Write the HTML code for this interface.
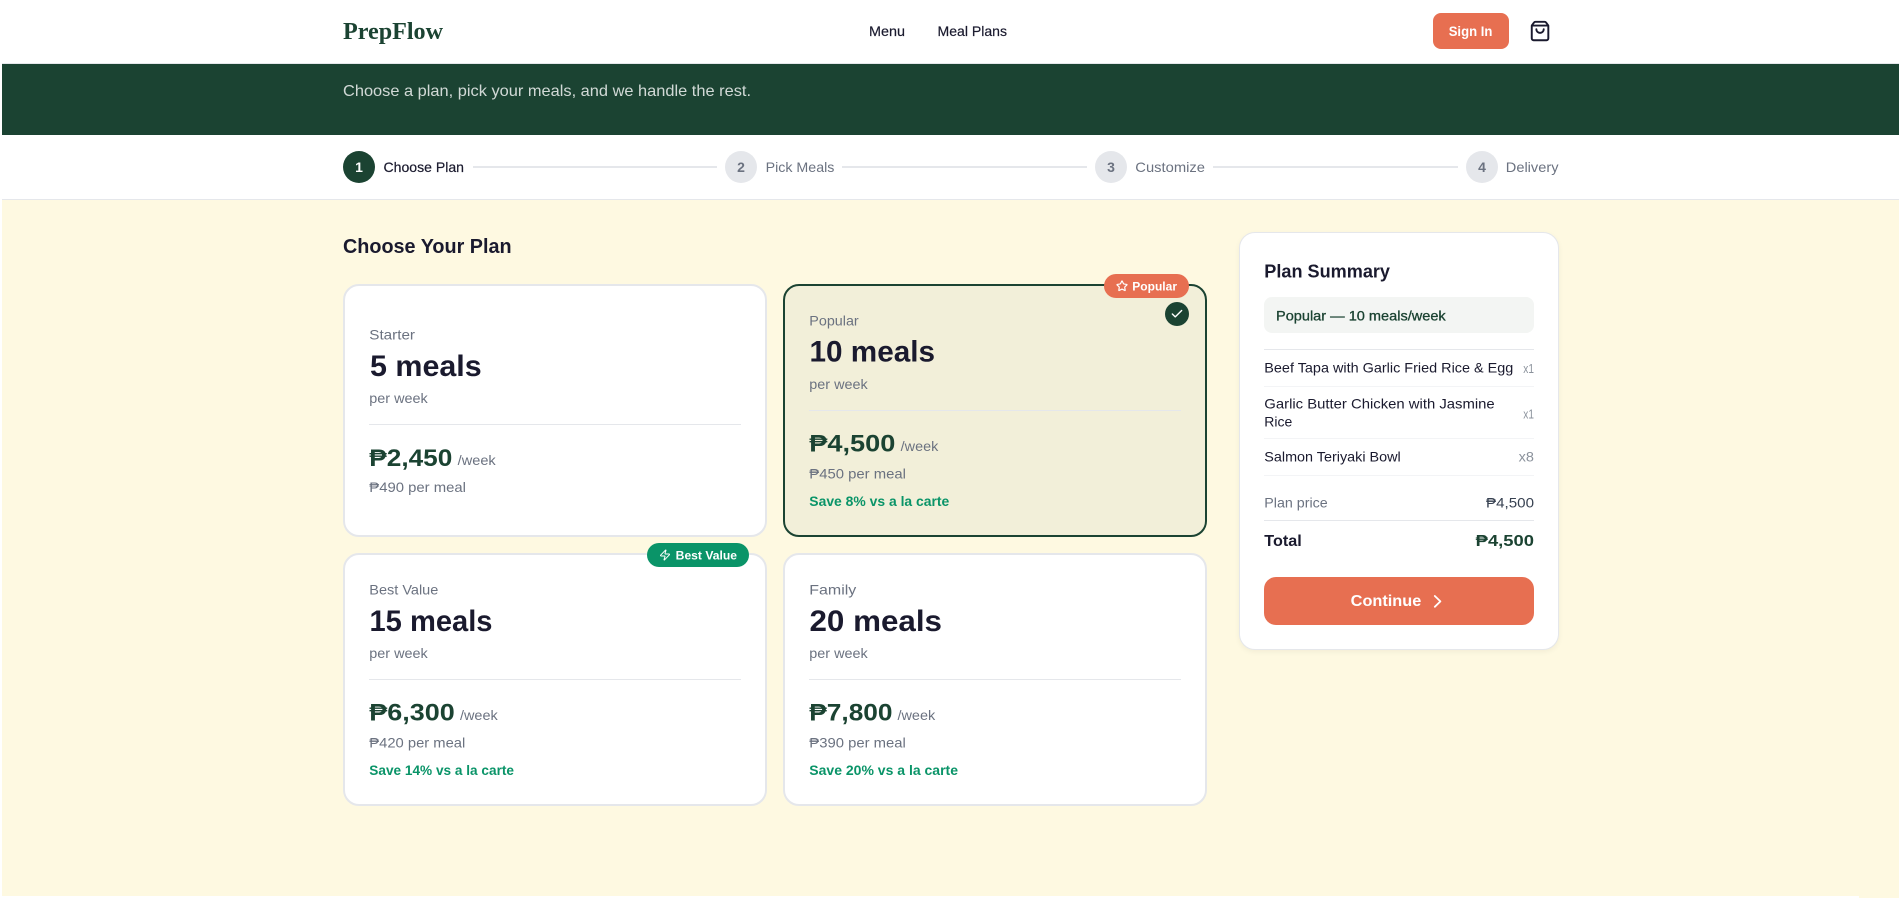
<!DOCTYPE html>
<html lang="en">
<head>
<meta charset="utf-8">
<title>PrepFlow - Choose Your Plan</title>
<style>
html,body{margin:0;padding:0;width:1899px;height:898px;overflow:hidden;background:#fff;font-family:"Liberation Sans",sans-serif}
.b{position:absolute;box-sizing:border-box}
.card{background:#fff;border:2px solid #e5e7eb;border-radius:16px;width:424px;height:253px}
.sel{background:#f2efd9;border-color:#1b4332}
.hr{height:1px;background:#e5e7eb}
.hl{height:1px;background:#f3f4f6}
.dot{width:32px;height:32px;border-radius:50%;background:#e5e7eb;top:151px}
.ln{height:2px;background:#e5e7eb;top:166px}
svg.over{position:absolute;left:0;top:0}
text{font-family:"Liberation Sans","DejaVu Sans",sans-serif;fill:#1a1a2e;font-size:14px}
.g{fill:#6b7280}
.bd{font-weight:700}
.m{stroke:#1a1a2e;stroke-width:.2px}
.pr{font-size:24px;font-weight:700;fill:#1b4332}
.ml{font-size:30px;font-weight:700}
.sv{font-weight:700;fill:#0a9468}
.w{fill:#fff}
.q{fill:#8b929c;font-size:13px}
</style>
</head>
<body>
<div class="b" style="left:2px;top:0;width:1897px;height:63px;background:#fff"></div>
<div class="b" style="left:2px;top:63px;width:1897px;height:1px;background:#e5e7eb"></div>
<div class="b" style="left:2px;top:64px;width:1897px;height:71px;background:#1b4332"></div>
<div class="b" style="left:2px;top:199px;width:1897px;height:1px;background:#e5e7eb"></div>
<div class="b" style="left:2px;top:200px;width:1897px;height:698px;background:#fef9e1"></div>
<div class="b" style="left:0;top:896px;width:1859px;height:2px;background:#fff"></div>

<div class="b" style="left:1433px;top:13px;width:76px;height:36px;background:#e76f51;border-radius:8px"></div>

<div class="b dot" style="left:343px;background:#1b4332"></div>
<div class="b ln" style="left:473px;width:244px"></div>
<div class="b dot" style="left:725px"></div>
<div class="b ln" style="left:842px;width:245px"></div>
<div class="b dot" style="left:1095px"></div>
<div class="b ln" style="left:1213px;width:245px"></div>
<div class="b dot" style="left:1466px"></div>

<div class="b card" style="left:343px;top:284px"></div>
<div class="b card sel" style="left:783px;top:284px"></div>
<div class="b card" style="left:343px;top:553px"></div>
<div class="b card" style="left:783px;top:553px"></div>

<div class="b hr" style="left:369px;top:424px;width:372px"></div>
<div class="b hr" style="left:809px;top:410px;width:372px"></div>
<div class="b hr" style="left:369px;top:679px;width:372px"></div>
<div class="b hr" style="left:809px;top:679px;width:372px"></div>

<div class="b" style="left:1104px;top:274px;width:85px;height:24px;background:#e76f51;border-radius:12px"></div>
<div class="b" style="left:1165px;top:302px;width:24px;height:24px;background:#1b4332;border-radius:50%"></div>
<div class="b" style="left:647px;top:543px;width:102px;height:24px;background:#0a9468;border-radius:12px"></div>

<div class="b" style="left:1239px;top:232px;width:320px;height:418px;background:#fff;border:1px solid #e5e7eb;border-radius:16px;box-shadow:0 2px 6px rgba(0,0,0,.05)"></div>
<div class="b" style="left:1264px;top:297px;width:270px;height:36px;background:#f3f5f3;border-radius:8px"></div>
<div class="b hr" style="left:1264px;top:349px;width:270px"></div>
<div class="b hl" style="left:1264px;top:386px;width:270px"></div>
<div class="b hl" style="left:1264px;top:438px;width:270px"></div>
<div class="b hl" style="left:1264px;top:475px;width:270px"></div>
<div class="b hr" style="left:1264px;top:520px;width:270px"></div>
<div class="b" style="left:1264px;top:577px;width:270px;height:48px;background:#e76f51;border-radius:12px"></div>

<svg class="over" width="1899" height="898" viewBox="0 0 1899 898" xmlns="http://www.w3.org/2000/svg">
<!-- nav -->
<text x="343" y="39" textLength="100" lengthAdjust="spacingAndGlyphs" style="font-family:'Liberation Serif',serif;font-size:24px;font-weight:700;fill:#1b4332">PrepFlow</text>
<text x="869" y="36" textLength="36" lengthAdjust="spacingAndGlyphs" class="m">Menu</text>
<text x="937.5" y="36" textLength="69.5" lengthAdjust="spacingAndGlyphs" class="m">Meal Plans</text>
<text x="1448.7" y="36" textLength="43.7" lengthAdjust="spacingAndGlyphs" class="bd w">Sign In</text>
<g transform="translate(1529 20) scale(.92)" fill="none" stroke="#1a1a2e" stroke-width="2.1" stroke-linecap="round" stroke-linejoin="round">
<path d="M16 10a4 4 0 0 1-8 0"/><path d="M3.103 6.034h17.794"/><path d="M3.4 5.467a2 2 0 0 0-.4 1.2V20a2 2 0 0 0 2 2h14a2 2 0 0 0 2-2V6.667a2 2 0 0 0-.4-1.2l-2-2.667A2 2 0 0 0 17 2H7a2 2 0 0 0-1.6.8z"/>
</g>
<!-- banner -->
<text x="343" y="96" textLength="408" lengthAdjust="spacingAndGlyphs" style="font-size:16px;fill:#fff;fill-opacity:.8">Choose a plan, pick your meals, and we handle the rest.</text>
<!-- stepper -->
<text x="359" y="172" text-anchor="middle" class="bd w">1</text>
<text x="383.5" y="172" textLength="80.5" lengthAdjust="spacingAndGlyphs" class="m">Choose Plan</text>
<text x="741" y="172" text-anchor="middle" class="bd g">2</text>
<text x="765.6" y="172" textLength="68.8" lengthAdjust="spacingAndGlyphs" class="g">Pick Meals</text>
<text x="1111" y="172" text-anchor="middle" class="bd g">3</text>
<text x="1135.3" y="172" textLength="69.7" lengthAdjust="spacingAndGlyphs" class="g">Customize</text>
<text x="1482" y="172" text-anchor="middle" class="bd g">4</text>
<text x="1505.8" y="172" textLength="52.7" lengthAdjust="spacingAndGlyphs" class="g">Delivery</text>
<!-- heading -->
<text x="343" y="253" textLength="168.6" lengthAdjust="spacingAndGlyphs" class="bd" style="font-size:20px">Choose Your Plan</text>
<!-- card 1 -->
<text x="369.3" y="339.3" textLength="45.7" lengthAdjust="spacingAndGlyphs" class="g">Starter</text>
<text x="370" y="376" textLength="111.7" lengthAdjust="spacingAndGlyphs" class="ml">5 meals</text>
<text x="369.3" y="403" textLength="58.4" lengthAdjust="spacingAndGlyphs" class="g">per week</text>
<text x="369.3" y="466" textLength="83" lengthAdjust="spacingAndGlyphs" class="pr">₱2,450</text>
<text x="457.7" y="465" textLength="38" lengthAdjust="spacingAndGlyphs" class="g">/week</text>
<text x="369.3" y="492" textLength="96.7" lengthAdjust="spacingAndGlyphs" class="g">₱490 per meal</text>
<!-- card 2 -->
<text x="809.3" y="325.3" textLength="49.4" lengthAdjust="spacingAndGlyphs" class="g">Popular</text>
<text x="809.5" y="361.7" textLength="125.5" lengthAdjust="spacingAndGlyphs" class="ml">10 meals</text>
<text x="809.3" y="389" textLength="58.4" lengthAdjust="spacingAndGlyphs" class="g">per week</text>
<text x="809.3" y="451.7" textLength="86" lengthAdjust="spacingAndGlyphs" class="pr">₱4,500</text>
<text x="900.7" y="451" textLength="37.6" lengthAdjust="spacingAndGlyphs" class="g">/week</text>
<text x="809.3" y="478.3" textLength="96.7" lengthAdjust="spacingAndGlyphs" class="g">₱450 per meal</text>
<text x="809.3" y="506" textLength="140" lengthAdjust="spacingAndGlyphs" class="sv">Save 8% vs a la carte</text>
<text x="1132.3" y="290.3" textLength="44.7" lengthAdjust="spacingAndGlyphs" class="bd w" style="font-size:12px">Popular</text>
<g transform="translate(1116 280) scale(.5)" fill="none" stroke="#fff" stroke-width="2.4" stroke-linecap="round" stroke-linejoin="round">
<path d="M11.525 2.295a.53.53 0 0 1 .95 0l2.31 4.679a2.123 2.123 0 0 0 1.595 1.16l5.166.756a.53.53 0 0 1 .294.904l-3.736 3.638a2.123 2.123 0 0 0-.611 1.878l.882 5.14a.53.53 0 0 1-.771.56l-4.618-2.428a2.122 2.122 0 0 0-1.973 0L6.396 21.01a.53.53 0 0 1-.77-.56l.881-5.139a2.122 2.122 0 0 0-.611-1.879L2.16 9.795a.53.53 0 0 1 .294-.906l5.165-.755a2.122 2.122 0 0 0 1.597-1.16z"/>
</g>
<g transform="translate(1170 307) scale(.583)" fill="none" stroke="#fff" stroke-width="2.4" stroke-linecap="round" stroke-linejoin="round"><path d="M20 6 9 17l-5-5"/></g>
<!-- card 3 -->
<text x="369.3" y="594.3" textLength="69" lengthAdjust="spacingAndGlyphs" class="g">Best Value</text>
<text x="369.5" y="631" textLength="123" lengthAdjust="spacingAndGlyphs" class="ml">15 meals</text>
<text x="369.3" y="658" textLength="58.4" lengthAdjust="spacingAndGlyphs" class="g">per week</text>
<text x="369.3" y="720.7" textLength="85.4" lengthAdjust="spacingAndGlyphs" class="pr">₱6,300</text>
<text x="460" y="720" textLength="37.7" lengthAdjust="spacingAndGlyphs" class="g">/week</text>
<text x="369.3" y="747.3" textLength="96" lengthAdjust="spacingAndGlyphs" class="g">₱420 per meal</text>
<text x="369.3" y="775" textLength="144.7" lengthAdjust="spacingAndGlyphs" class="sv">Save 14% vs a la carte</text>
<text x="675.7" y="559.3" textLength="61.3" lengthAdjust="spacingAndGlyphs" class="bd w" style="font-size:12px">Best Value</text>
<g transform="translate(659 549) scale(.5)" fill="none" stroke="#fff" stroke-width="2" stroke-linecap="round" stroke-linejoin="round">
<path d="M4 14a1 1 0 0 1-.78-1.63l9.9-10.2a.5.5 0 0 1 .86.46l-1.92 6.02A1 1 0 0 0 13 10h7a1 1 0 0 1 .78 1.63l-9.9 10.2a.5.5 0 0 1-.86-.46l1.92-6.02A1 1 0 0 0 11 14z"/>
</g>
<!-- card 4 -->
<text x="809.3" y="594.3" textLength="47" lengthAdjust="spacingAndGlyphs" class="g">Family</text>
<text x="809.5" y="631" textLength="132.5" lengthAdjust="spacingAndGlyphs" class="ml">20 meals</text>
<text x="809.3" y="658" textLength="58.4" lengthAdjust="spacingAndGlyphs" class="g">per week</text>
<text x="809.3" y="720.7" textLength="83.2" lengthAdjust="spacingAndGlyphs" class="pr">₱7,800</text>
<text x="897.5" y="720" textLength="37.7" lengthAdjust="spacingAndGlyphs" class="g">/week</text>
<text x="809.3" y="747.3" textLength="96.5" lengthAdjust="spacingAndGlyphs" class="g">₱390 per meal</text>
<text x="809.3" y="775" textLength="148.7" lengthAdjust="spacingAndGlyphs" class="sv">Save 20% vs a la carte</text>
<!-- summary -->
<text x="1264.3" y="277.3" textLength="125.7" lengthAdjust="spacingAndGlyphs" class="bd" style="font-size:18px">Plan Summary</text>
<text x="1276" y="320.3" textLength="169.7" lengthAdjust="spacingAndGlyphs" class="m" style="fill:#1b4332;stroke:#1b4332;stroke-width:.3px">Popular — 10 meals/week</text>
<text x="1264.3" y="372.3" textLength="249" lengthAdjust="spacingAndGlyphs">Beef Tapa with Garlic Fried Rice &amp; Egg</text>
<text x="1523.3" y="373" textLength="10.7" lengthAdjust="spacingAndGlyphs" class="q">x1</text>
<text x="1264.3" y="408.7" textLength="230.4" lengthAdjust="spacingAndGlyphs">Garlic Butter Chicken with Jasmine</text>
<text x="1264.3" y="426.7" textLength="28" lengthAdjust="spacingAndGlyphs">Rice</text>
<text x="1523.3" y="418.3" textLength="10.7" lengthAdjust="spacingAndGlyphs" class="q">x1</text>
<text x="1264.3" y="461.3" textLength="136.4" lengthAdjust="spacingAndGlyphs">Salmon Teriyaki Bowl</text>
<text x="1518.7" y="461.3" textLength="15.3" lengthAdjust="spacingAndGlyphs" class="q" style="font-size:14px">x8</text>
<text x="1264.3" y="507.3" textLength="63.4" lengthAdjust="spacingAndGlyphs" class="g">Plan price</text>
<text x="1486" y="507.3" textLength="48" lengthAdjust="spacingAndGlyphs" style="fill:#374151">₱4,500</text>
<text x="1264.3" y="546" textLength="37.4" lengthAdjust="spacingAndGlyphs" class="bd" style="font-size:16px">Total</text>
<text x="1475.7" y="546" textLength="58.3" lengthAdjust="spacingAndGlyphs" class="bd" style="font-size:16px;fill:#1b4332">₱4,500</text>
<text x="1350.7" y="606" textLength="70.6" lengthAdjust="spacingAndGlyphs" class="bd w" style="font-size:16px">Continue</text>
<path d="m1434.8 596 5.6 5.4-5.6 5.4" fill="none" stroke="#fff" stroke-width="1.8" stroke-linecap="round" stroke-linejoin="round"/>
</svg>
</body>
</html>
